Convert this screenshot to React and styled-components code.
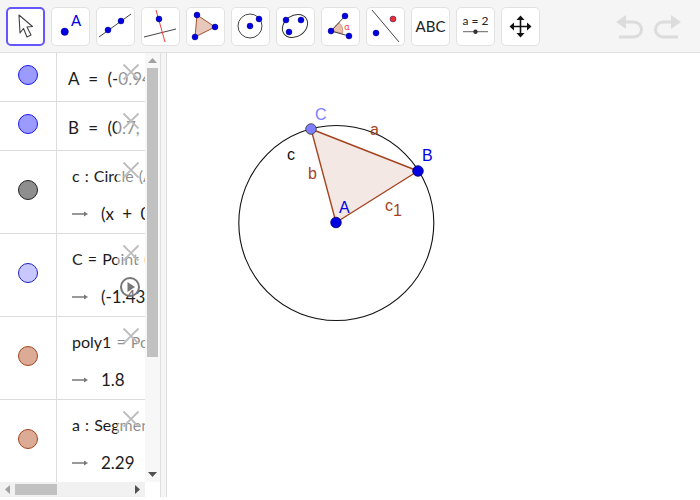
import styled, { createGlobalStyle } from 'styled-components'

const GlobalStyle = createGlobalStyle`
  html, body {
    margin: 0;
    padding: 0;
    background: white;
    font-family: 'Lato', 'Liberation Sans', sans-serif;
  }
`

const Page = styled.div`
  width: 700px;
  height: 500px;
  display: flex;
  flex-direction: column;
  overflow: hidden;
  background: white;
`

const Toolbar = styled.div`
  height: 53px;
  flex: none;
  display: flex;
  align-items: flex-start;
  gap: 6px;
  padding: 7px 0 0 6px;
  box-sizing: border-box;
  background: #f5f5f5;
  border-bottom: 1px solid #e0e0e0;
`

const ToolButton = styled.div`
  width: 39px;
  height: 39px;
  flex: none;
  box-sizing: border-box;
  background: white;
  border: ${p => (p.$active ? '2px solid #6557ff' : '1px solid #e2e2e2')};
  border-radius: 5px;
  display: flex;
  align-items: center;
  justify-content: center;

  svg {
    display: block;
    flex: none;
  }
`

const UndoRedo = styled.div`
  margin: 7px 0 0 auto;
  padding-right: 19px;
  display: flex;
  gap: 9px;
`

const Main = styled.div`
  height: 444px;
  flex: none;
  display: flex;
`

const AlgebraPanel = styled.div`
  width: 160px;
  flex: none;
  display: grid;
  grid-template-columns: 145px 15px;
  grid-template-rows: 429px 15px;
  background: white;
`

const RowList = styled.div`
  overflow: hidden;
`

const Row = styled.div`
  height: ${p => p.$height}px;
  box-sizing: border-box;
  border-bottom: 1px solid #dcdcdc;
  display: flex;
  position: relative;
`

const MarbleCell = styled.div`
  width: 57px;
  flex: none;
  box-sizing: border-box;
  border-right: 1px solid #dcdcdc;
  display: flex;
  align-items: center;
  justify-content: center;
  padding-bottom: 5px;
`

const Marble = styled.div`
  width: 20px;
  height: 20px;
  box-sizing: border-box;
  border-radius: 50%;
  background: ${p => p.$fill};
  border: 1px solid ${p => p.$stroke};
`

const RowBody = styled.div`
  flex: 1;
  min-width: 0;
  display: flex;
  flex-direction: column;
  overflow: hidden;
  white-space: nowrap;
  color: #1c1c1c;
`

const SimpleLine = styled.div`
  font-size: 17px;
  word-spacing: 5px;
  padding: 16px 0 0 11px;
  line-height: 20px;
`

const Definition = styled.div`
  font-size: 16px;
  padding: 15px 0 0 15px;
  line-height: 20px;
  word-spacing: 1px;
`

const Output = styled.div`
  font-size: 17px;
  padding: 18px 0 0 15px;
  line-height: 20px;
  display: flex;
  align-items: center;
  gap: 13px;
  word-spacing: 4px;

  svg {
    flex: none;
  }
`

const DeleteButton = styled.div`
  position: absolute;
  top: 0;
  right: 0;
  width: 28px;
  height: 40px;
  background: rgba(255, 255, 255, 0.5);
  display: flex;
  justify-content: center;
  padding-top: 10px;
  box-sizing: border-box;
`

const PlayButton = styled.div`
  position: absolute;
  left: 119px;
  top: 42px;
  line-height: 0;
`

const VScroll = styled.div`
  background: #f7f7f7;
  display: flex;
  flex-direction: column;
  align-items: center;
`

const ScrollArrow = styled.div`
  flex: none;
  width: 15px;
  height: 15px;
  display: flex;
  align-items: center;
  justify-content: center;
`

const VThumb = styled.div`
  width: 11px;
  height: 289px;
  margin-bottom: auto;
  background: #c1c1c1;
`

const HScroll = styled.div`
  background: #f1f1f1;
  display: flex;
  align-items: center;
`

const HThumb = styled.div`
  width: 42px;
  height: 11px;
  margin-right: auto;
  background: #c1c1c1;
`

const Corner = styled.div`
  background: white;
`

const Divider = styled.div`
  width: 7px;
  flex: none;
  height: 444px;
  box-sizing: border-box;
  background: #f5f5f5;
  border-left: 1px solid #dedede;
  border-right: 1px solid #dedede;
`

const Canvas = styled.div`
  flex: 1;
  background: white;
  overflow: hidden;

  svg {
    display: block;
  }
`

const BLUE = '#0000e0'

const Dot = ({ x, y, r = 3, fill = BLUE }) => <circle cx={x} cy={y} r={r} fill={fill} stroke="#00006a" strokeWidth="0.4" />

const tools = [
  <>
    <polygon points="13,8 14,26 17.5,21.5 21,30 25,28 21,20 26.5,19.5" fill="white" stroke="#444" strokeWidth="1.1" strokeLinejoin="round" />
  </>,
  <>
    <Dot x={13.7} y={24.7} r={3.7} />
    <text x={25} y={19} textAnchor="middle" fontSize="15" fontFamily="Lato, sans-serif" fill={BLUE}>A</text>
  </>,
  <>
    <line x1="3" y1="30" x2="35" y2="7" stroke="#444" strokeWidth="1" />
    <Dot x={12} y={23} />
    <Dot x={25} y={14} />
  </>,
  <>
    <line x1="3" y1="30" x2="35" y2="22" stroke="#444" strokeWidth="1" />
    <line x1="15" y1="3" x2="24" y2="35" stroke="#f04040" strokeWidth="1" />
    <Dot x={18} y={12} />
  </>,
  <>
    <polygon points="11,8 29,20 9,30" fill="#e8c8ba" stroke="#a5502d" strokeWidth="1" />
    <Dot x={11} y={8} />
    <Dot x={29} y={20} />
    <Dot x={9} y={30} />
  </>,
  <>
    <circle cx="19" cy="19" r="12" fill="none" stroke="#444" strokeWidth="1" />
    <Dot x={19} y={19} />
    <Dot x={28} y={12} />
  </>,
  <>
    <ellipse cx="19" cy="19" rx="13.5" ry="10.5" transform="rotate(-35 19 19)" fill="none" stroke="#333" strokeWidth="1" />
    <Dot x={10} y={13} />
    <Dot x={25} y={13} />
    <Dot x={13} y={25} />
  </>,
  <>
    <path d="M10 24 L18 15.5 A12 12 0 0 1 21.5 26.5 Z" fill="#e8c0b0" stroke="#c07050" strokeWidth="0.6" />
    <polyline points="24,9 10,24 28,29" fill="none" stroke="#444" strokeWidth="1" />
    <Dot x={10} y={24} />
    <Dot x={24} y={9} />
    <Dot x={28} y={29} />
    <text x={26} y={23} textAnchor="middle" fontSize="9" fontFamily="Lato, sans-serif" fill="#f04040">α</text>
  </>,
  <>
    <line x1="6" y1="3" x2="33" y2="35" stroke="#444" strokeWidth="1" />
    <Dot x={10} y={26} />
    <Dot x={27} y={12} fill="#e83030" />
  </>,
  <>
    <text x={19.5} y={25} textAnchor="middle" fontSize="15" fontFamily="Lato, sans-serif" fill="#222">ABC</text>
  </>,
  <>
    <text x={19.5} y={18} textAnchor="middle" fontSize="12" fontFamily="Lato, sans-serif" fill="#222">a = 2</text>
    <line x1="7" y1="24.7" x2="32" y2="24.7" stroke="#666" strokeWidth="1" />
    <circle cx="19.5" cy="24.7" r="2.2" fill="#333" />
  </>,
  <>
    <path d="M19.5 11 V28 M11 19.5 H28" stroke="#111" strokeWidth="1.6" />
    <polygon points="19.5,8.5 15.5,13 23.5,13" fill="#111" />
    <polygon points="19.5,30.5 15.5,26 23.5,26" fill="#111" />
    <polygon points="8.5,19.5 13,15.5 13,23.5" fill="#111" />
    <polygon points="30.5,19.5 26,15.5 26,23.5" fill="#111" />
  </>,
]

const ArrowMark = () => (
  <svg width="16" height="8" viewBox="0 0 16 8">
    <path d="M0 4 H13" stroke="#777" strokeWidth="1.5" />
    <path d="M12 1.5 L16 4 L12 6.5 Z" fill="#777" />
  </svg>
)

const CloseMark = () => (
  <svg width="18" height="18" viewBox="0 0 18 18">
    <path d="M1.5 1.5 L16.5 16.5 M16.5 1.5 L1.5 16.5" stroke="#bdbdbd" strokeWidth="1.8" fill="none" />
  </svg>
)

const rows = [
  { height: 49, fill: '#9a9aff', stroke: '#1a1aee', line: 'A = (-0.94, 0.02)' },
  { height: 49, fill: '#9a9aff', stroke: '#1a1aee', line: 'B = (0.7, 0.94)' },
  { height: 83, fill: '#8e8e8e', stroke: '#222', def: 'c : Circle (A, B)', out: '(x + 0.94)² + (y − 0.02)² = 3.55' },
  { height: 83, fill: '#c8c8ff', stroke: '#2020c0', def: 'C = Point (c)', out: '(-1.43, 1.83)', play: true },
  { height: 83, fill: '#dbab96', stroke: '#a5431f', def: 'poly1 = Polygon (A, B, C)', out: '1.8' },
  { height: 83, fill: '#dbab96', stroke: '#a5431f', def: 'a : Segment (B, C)', out: '2.29' },
]

export default function App() {
  return (
    <Page>
      <GlobalStyle />
      <Toolbar>
        {tools.map((icon, i) => (
          <ToolButton key={i} $active={i === 0}>
            <svg width="39" height="39" viewBox="0 0 39 39" style={{ margin: i === 0 ? -2 : -1 }}>{icon}</svg>
          </ToolButton>
        ))}
        <UndoRedo>
          <svg width="28" height="26" viewBox="0 0 28 26">
            <path d="M3 8 H18 A7.5 7.5 0 0 1 18 23 H3" fill="none" stroke="#dcdcdc" strokeWidth="3" />
            <polygon points="0,8 10,1 10,15" fill="#dcdcdc" />
          </svg>
          <svg width="28" height="26" viewBox="0 0 28 26">
            <path d="M25 8 H10 A7.5 7.5 0 0 0 10 23 H25" fill="none" stroke="#dcdcdc" strokeWidth="3" />
            <polygon points="28,8 18,1 18,15" fill="#dcdcdc" />
          </svg>
        </UndoRedo>
      </Toolbar>
      <Main>
        <AlgebraPanel>
          <RowList>
            {rows.map((r, i) => (
              <Row key={i} $height={r.height}>
                <MarbleCell>
                  <Marble $fill={r.fill} $stroke={r.stroke} />
                </MarbleCell>
                <RowBody>
                  {r.line && <SimpleLine>{r.line}</SimpleLine>}
                  {r.def && <Definition>{r.def}</Definition>}
                  {r.out && (
                    <Output>
                      <ArrowMark />
                      <span>{r.out}</span>
                    </Output>
                  )}
                </RowBody>
                <DeleteButton>
                  <CloseMark />
                </DeleteButton>
                {r.play && (
                  <PlayButton>
                    <svg width="22" height="22" viewBox="0 0 22 22">
                      <circle cx="11" cy="11" r="9" fill="rgba(255,255,255,0.4)" stroke="#777" strokeWidth="2" />
                      <polygon points="8.5,6 8.5,16 16,11" fill="#777" />
                    </svg>
                  </PlayButton>
                )}
              </Row>
            ))}
          </RowList>
          <VScroll>
            <ScrollArrow>
              <svg width="9" height="5" viewBox="0 0 9 5"><polygon points="4.5,0 9,5 0,5" fill="#a0a0a0" /></svg>
            </ScrollArrow>
            <VThumb />
            <ScrollArrow>
              <svg width="9" height="5" viewBox="0 0 9 5"><polygon points="0,0 9,0 4.5,5" fill="#505050" /></svg>
            </ScrollArrow>
          </VScroll>
          <HScroll>
            <ScrollArrow>
              <svg width="5" height="9" viewBox="0 0 5 9"><polygon points="5,0 5,9 0,4.5" fill="#a0a0a0" /></svg>
            </ScrollArrow>
            <HThumb />
            <ScrollArrow>
              <svg width="5" height="9" viewBox="0 0 5 9"><polygon points="0,0 5,4.5 0,9" fill="#505050" /></svg>
            </ScrollArrow>
          </HScroll>
          <Corner />
        </AlgebraPanel>
        <Divider />
        <Canvas>
          <svg width="533" height="444" viewBox="167 53 533 444" fontFamily="'Liberation Sans', sans-serif" fontSize="16">
            <polygon points="336,222.5 418,171 311,129" fill="#a5431f" fillOpacity="0.12" stroke="#a5431f" strokeWidth="1.4" />
            <circle cx="336.3" cy="223" r="97.5" fill="none" stroke="#111" strokeWidth="1.1" />
            <circle cx="336" cy="222.5" r="5.3" fill={BLUE} stroke="#00006a" strokeWidth="0.8" />
            <circle cx="418" cy="171" r="5.3" fill={BLUE} stroke="#00006a" strokeWidth="0.8" />
            <circle cx="311" cy="129" r="5.3" fill="#7d7dff" stroke="#333" strokeWidth="0.8" />
            <text x="339" y="213" fill={BLUE}>A</text>
            <text x="422" y="161" fill={BLUE}>B</text>
            <text x="315" y="120" fill="#7d7dff">C</text>
            <text x="287" y="160" fill="#111">c</text>
            <text x="370" y="135" fill="#a5431f">a</text>
            <text x="308" y="179" fill="#a5431f">b</text>
            <text x="385" y="211" fill="#a5431f">c<tspan dy="5">1</tspan></text>
          </svg>
        </Canvas>
      </Main>
    </Page>
  )
}
